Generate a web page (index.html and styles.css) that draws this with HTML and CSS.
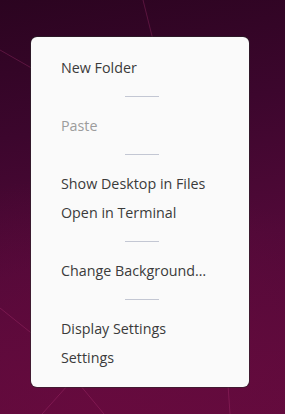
FILE: index.html
```html
<!DOCTYPE html>
<html>
<head>
<meta charset="utf-8">
<link rel="stylesheet" href="styles.css">
</head>
<body>
<div class="desktop">
  <svg class="wallpaper-lines" width="285" height="414" viewBox="0 0 285 414">
    <line x1="143" y1="0" x2="153" y2="40" />
    <line x1="0" y1="50" x2="35" y2="70" />
    <line x1="0" y1="308" x2="35" y2="336" />
    <line x1="68" y1="385" x2="42" y2="414" />
    <line x1="80" y1="385" x2="104" y2="414" />
    <line x1="228" y1="385" x2="230" y2="414" />
  </svg>
  <div class="menu">
    <div class="item">New Folder</div>
    <div class="sep"><span></span></div>
    <div class="item disabled">Paste</div>
    <div class="sep"><span></span></div>
    <div class="item">Show Desktop in Files</div>
    <div class="item">Open in Terminal</div>
    <div class="sep"><span></span></div>
    <div class="item">Change Background…</div>
    <div class="sep"><span></span></div>
    <div class="item">Display Settings</div>
    <div class="item">Settings</div>
  </div>
</div>
</body>
</html>
```
FILE: styles.css
```css
html, body {
  margin: 0;
  padding: 0;
}
body {
  width: 285px;
  height: 414px;
  overflow: hidden;
  font-family: "Open Sans", "Noto Sans", sans-serif;
}
.desktop {
  position: relative;
  width: 285px;
  height: 414px;
  background:
    radial-gradient(ellipse 320px 240px at 35% 100%, rgba(104, 10, 62, 0.8), rgba(104, 10, 62, 0) 100%),
    linear-gradient(170deg, #2b0420 0%, #3c062d 30%, #510938 60%, #620b3d 100%);
  display: flex;
  align-items: flex-start;
  padding: 37px 0 0 31px;
  box-sizing: border-box;
}
.wallpaper-lines {
  position: absolute;
  left: 0;
  top: 0;
}
.wallpaper-lines line {
  stroke: rgba(190, 60, 125, 0.3);
  stroke-width: 1;
}
.menu {
  position: relative;
  width: 218px;
  height: 350px;
  box-sizing: border-box;
  background: #fafafa;
  border-radius: 6px;
  box-shadow: 0 0 0 1px rgba(40, 40, 40, 0.55);
  padding: 16px 0 15px 30px;
  display: flex;
  flex-direction: column;
}
.item {
  height: 29px;
  line-height: 29px;
  font-size: 14.3px;
  color: #3b3b3b;
  white-space: nowrap;
}
.item.disabled {
  color: #9c9c9c;
}
.sep {
  height: 29px;
  display: flex;
  align-items: center;
  padding-left: 64px;
}
.sep span {
  display: block;
  width: 34px;
  height: 1px;
  background: #c3c7d3;
}
```
